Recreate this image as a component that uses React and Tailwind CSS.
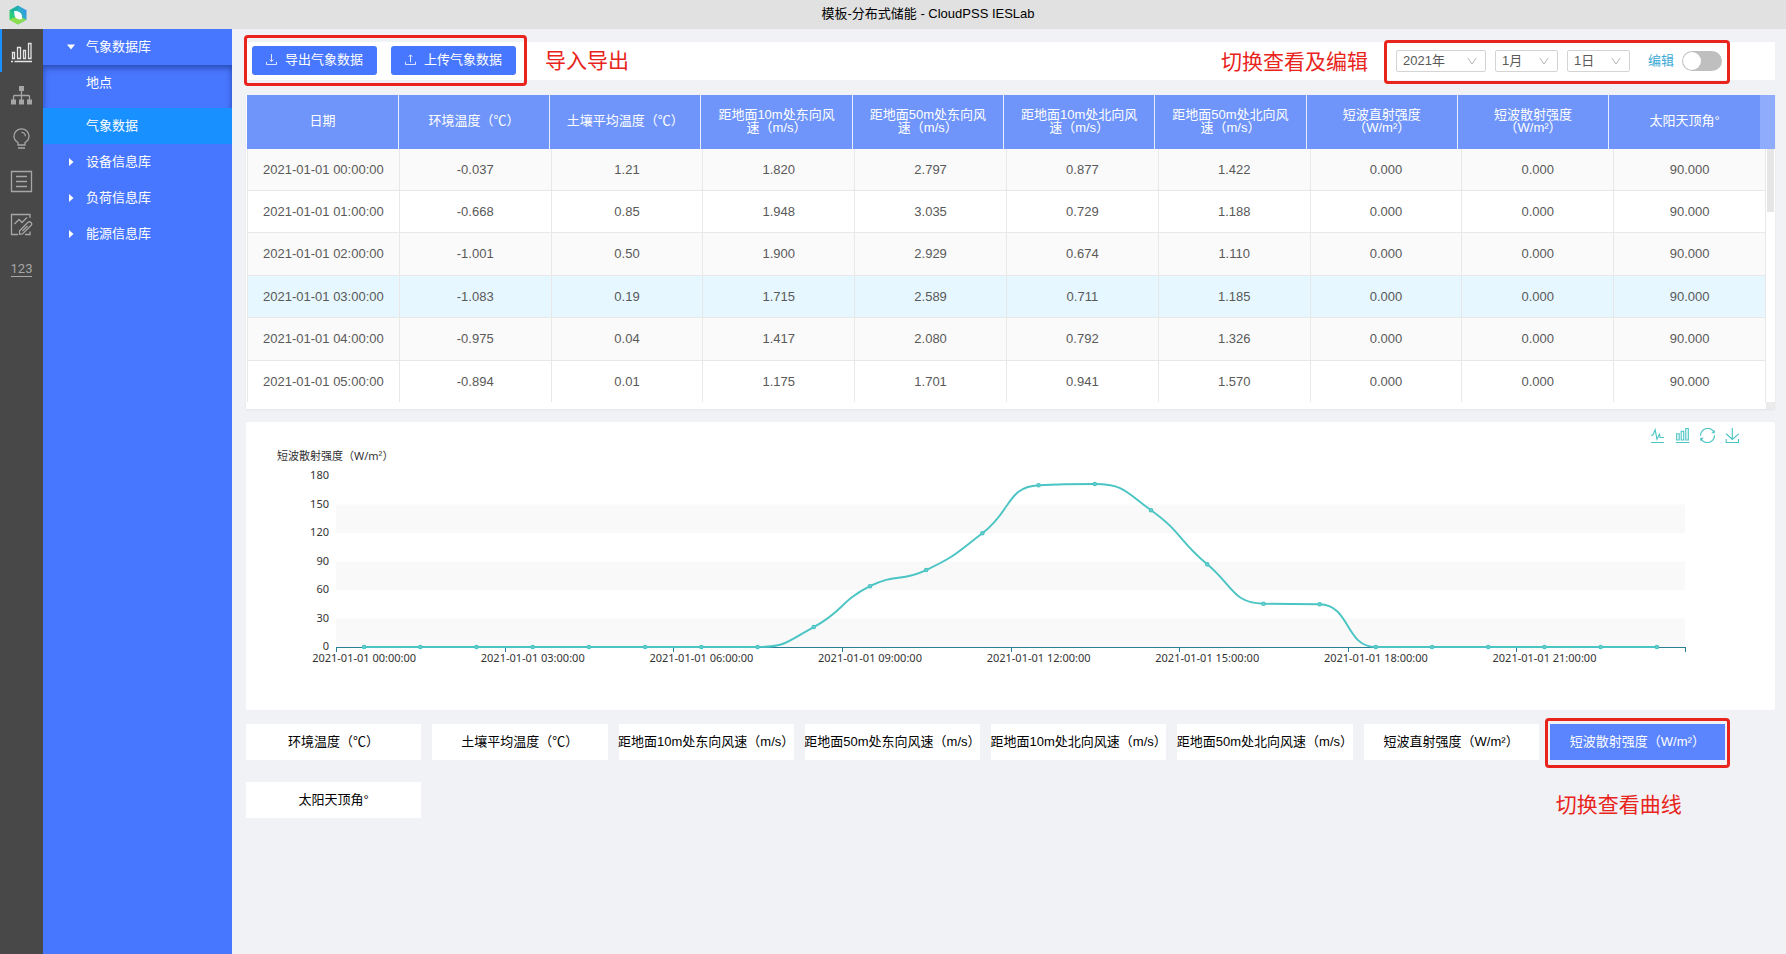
import React, { useState } from 'react';

const columns = [
  '日期',
  '环境温度（℃）',
  '土壤平均温度（℃）',
  '距地面10m处东向风速（m/s）',
  '距地面50m处东向风速（m/s）',
  '距地面10m处北向风速（m/s）',
  '距地面50m处北向风速（m/s）',
  '短波直射强度（W/m²）',
  '短波散射强度（W/m²）',
  '太阳天顶角°',
];

const rows = [
  ['2021-01-01 00:00:00', '-0.037', '1.21', '1.820', '2.797', '0.877', '1.422', '0.000', '0.000', '90.000'],
  ['2021-01-01 01:00:00', '-0.668', '0.85', '1.948', '3.035', '0.729', '1.188', '0.000', '0.000', '90.000'],
  ['2021-01-01 02:00:00', '-1.001', '0.50', '1.900', '2.929', '0.674', '1.110', '0.000', '0.000', '90.000'],
  ['2021-01-01 03:00:00', '-1.083', '0.19', '1.715', '2.589', '0.711', '1.185', '0.000', '0.000', '90.000'],
  ['2021-01-01 04:00:00', '-0.975', '0.04', '1.417', '2.080', '0.792', '1.326', '0.000', '0.000', '90.000'],
  ['2021-01-01 05:00:00', '-0.894', '0.01', '1.175', '1.701', '0.941', '1.570', '0.000', '0.000', '90.000'],
];

const radiation = [0, 0, 0, 0, 0, 0, 0, 0, 21, 64, 81, 119.7, 170.2, 171.6, 144, 87, 45.6, 45, 0, 0, 0, 0, 0, 0];

// Plot area inside the chart's viewBox
const PLOT = { left: 90, right: 1439, top: 54, bottom: 225, max: 180 };
const STEP = (PLOT.right - PLOT.left) / radiation.length;

const points = radiation.map((v, i) => [
  PLOT.left + STEP * (i + 0.5),
  PLOT.bottom - (v / PLOT.max) * (PLOT.bottom - PLOT.top),
]);

const clamp = (v, a, b) => Math.max(Math.min(v, Math.max(a, b)), Math.min(a, b));

// Bezier path whose control points never leave the box of their segment
function smoothPath(pts, smooth = 0.5) {
  let d = `M${pts[0][0]},${pts[0][1]}`;
  let cp0 = pts[0];
  for (let i = 1; i < pts.length; i++) {
    const [x, y] = pts[i];
    const prev = pts[i - 1];
    const next = pts[i + 1];
    let cp1 = [x, y];
    let nextCp0 = [x, y];
    if (next) {
      const lenPrev = Math.hypot(x - prev[0], y - prev[1]);
      const lenNext = Math.hypot(next[0] - x, next[1] - y);
      const ratio = lenNext / (lenNext + lenPrev);
      const nx = clamp(x + (next[0] - prev[0]) * smooth * ratio, next[0], x);
      const ny = clamp(y + (next[1] - prev[1]) * smooth * ratio, next[1], y);
      cp1 = [
        clamp(x - ((nx - x) * lenPrev) / lenNext, prev[0], x),
        clamp(y - ((ny - y) * lenPrev) / lenNext, prev[1], y),
      ];
      nextCp0 = [x + ((x - cp1[0]) * lenNext) / lenPrev, y + ((y - cp1[1]) * lenNext) / lenPrev];
    }
    d += `C${cp0[0]},${cp0[1]},${cp1[0]},${cp1[1]},${x},${y}`;
    cp0 = nextCp0;
  }
  return d;
}

function Logo() {
  return (
    <svg viewBox="0 0 18 20" className="w-[18px] h-5">
      <defs>
        <linearGradient id="logo" x1="0" y1="0.7" x2="1" y2="0.2">
          <stop offset="0" stopColor="#2fd45f" />
          <stop offset="0.5" stopColor="#22bfae" />
          <stop offset="1" stopColor="#3a8ff0" />
        </linearGradient>
      </defs>
      <path d="M9 0.5 17.5 5.2V14.8L9 19.5 0.5 14.8V5.2Z" fill="url(#logo)" />
      <path d="M0.5 14.8 9 19.5 17.5 14.8 13 12.500 5 12.500Z" fill="#a5e23c" opacity="0.8" />
      <path d="M0.5 5.2 9 0.5V4L4 8Z" fill="#1fa8a0" opacity="0.6" />
      <path d="M5 6.300C8 5.600 11.800 7 12.900 10.300C13.300 12.200 12.900 14 12.900 14C10.800 14.900 7.800 14.400 6.300 12.300C5 10.300 5.700 8.300 5 6.300Z" fill="#fff" />
    </svg>
  );
}

const railIcons = [
  {
    label: '数据',
    art: (
      <>
        <path d="M1 20.500H3M4.500 20.500H22" />
        <path d="M2.500 11.500H4.500V17.500H2.500ZM7.500 6.500H10.500V17.500H7.500ZM13.500 9.500H15.500V17.500H13.500ZM18.500 2.500H21V17.500H18.500Z" />
      </>
    ),
  },
  {
    label: '拓扑',
    art: (
      <>
        <path d="M11.500 6V16M3.500 16V12.500Q3.500 11.500 4.500 11.500H18.500Q19.500 11.500 19.500 12.500V16" />
        <path d="M9 2H14V7H9ZM1 15.500H6V20.500H1ZM9 15.500H14V20.500H9ZM17 15.500H22V20.500H17Z" fill="currentColor" stroke="none" />
      </>
    ),
  },
  {
    label: '方案',
    art: (
      <>
        <path d="M8 18V15.500C5.500 14.200 4 12 4 9.300A7.500 7.500 0 0 1 19 9.300C19 12 17.500 14.200 15 15.500V18Z" />
        <path d="M11.500 5.300A4 4 0 0 1 15.500 9.300M8 21H15" />
      </>
    ),
  },
  {
    label: '列表',
    art: (
      <>
        <path d="M1.500 1.500H21.500V21.500H1.500Z" />
        <path d="M6 6.500H17M6 11.500H17M6 16.500H17" />
      </>
    ),
  },
  {
    label: '评估',
    art: (
      <>
        <path d="M20 5V1.500H1.500V21.500H8M15 21.500H20V18.500" />
        <path d="M4.500 11 9 6.500 12 9.500 17 4.500" />
        <path d="M9.500 18 18 9.300Q19.500 8 21 9.500T21 12.500L12.500 21 9.500 21.300ZM12.500 18 17.500 13" />
      </>
    ),
  },
];

function Rail() {
  return (
    <nav className="w-[43px] shrink-0 bg-[#484848] flex flex-col">
      {railIcons.map((icon, i) => (
        <button
          key={icon.label}
          aria-label={icon.label}
          className={`h-[43px] w-full pt-1 flex items-center justify-center border-x-2 border-r-transparent ${
            i === 0 ? 'text-[#e4e4e4] border-l-[#1890ff]' : 'text-[#a6a6a6] border-l-transparent'
          }`}
        >
          <svg viewBox="0 0 23 23" className="w-[23px] h-[23px]" fill="none" stroke="currentColor" strokeWidth="1.300">
            {icon.art}
          </svg>
        </button>
      ))}
      <button className="h-[43px] w-full pt-2 flex items-center justify-center text-[#a6a6a6]">
        <span className="font-[Roboto] text-[13px] leading-[14px] border-b border-[#a6a6a6]">123</span>
      </button>
    </nav>
  );
}

function Sidebar() {
  return (
    <aside className="w-[189px] shrink-0 bg-[#4877ff] text-white">
      <a href="#weather" className="h-9 pl-6 pb-px flex items-center">
        <svg viewBox="0 0 8 6" className="w-2 h-[6px] mr-[11px]" fill="currentColor"><path d="M0 0.500H8L4 5.500Z" /></svg>
        气象数据库
      </a>
      <div className="shadow-[inset_0_3px_6px_rgba(0,21,80,0.45)]">
        <a href="#place" className="h-[43px] pl-[43px] pb-2 flex items-center">地点</a>
        <a href="#data" className="h-9 pl-[43px] pb-px flex items-center bg-[#1890ff]">气象数据</a>
      </div>
      {['设备信息库', '负荷信息库', '能源信息库'].map((name) => (
        <a key={name} href={`#${name}`} className="h-9 pl-6 pb-px flex items-center">
          <svg viewBox="0 0 8 8" className="w-2 h-2 mr-[11px]" fill="currentColor"><path d="M2 0V8L6.500 4Z" /></svg>
          {name}
        </a>
      ))}
    </aside>
  );
}

// Red frame that points out a group of controls
function Frame({ className }) {
  return <div className={`absolute border-[3px] border-[#e8241c] rounded-[4px] pointer-events-none ${className}`} />;
}

function ToolButton({ upload, children }) {
  return (
    <button className="w-[125px] h-[29px] pb-[2px] rounded-[3px] bg-[#4877ff] text-white flex items-center justify-center gap-2">
      <svg viewBox="0 0 12 12" className="w-[11px] h-[11px]" fill="none" stroke="currentColor" strokeWidth="0.900">
        <path d="M0.500 8.500V11.500H11.500V8.500" />
        {upload ? <path d="M6 9V1M4 3 6 1 8 3" /> : <path d="M6 0V8M4 6.200 6 8.200 8 6.200" />}
      </svg>
      {children}
    </button>
  );
}

function Picker({ label, value, className }) {
  return (
    <div className={`relative ${className}`}>
      <select
        aria-label={label}
        defaultValue={value}
        className="w-full h-[22px] pl-[6px] pb-[3px] appearance-none bg-white border border-[#d4d4d4] rounded-[2px] text-[#595959]"
      >
        <option>{value}</option>
      </select>
      <svg viewBox="0 0 10 8" className="absolute right-[9px] top-[7px] w-[10px] h-2 pointer-events-none" fill="none" stroke="#b5b5b5">
        <path d="M0.800 1 5 7 9.200 1" />
      </svg>
    </div>
  );
}

function Toolbar() {
  const [editing, setEditing] = useState(false);
  return (
    <div className="mt-[13px] h-[38px] bg-white flex items-center pl-[6px] pr-[53px]">
      <div className="relative flex gap-[14px] mb-px">
        <ToolButton>导出气象数据</ToolButton>
        <ToolButton upload>上传气象数据</ToolButton>
        <Frame className="-left-2 -right-[11px] -inset-y-[11px]" />
      </div>
      <span className="ml-[29px] text-[21px] text-[#e8241c]">导入导出</span>
      <span className="ml-auto pt-[2px] text-[21px] text-[#e8241c]">切换查看及编辑</span>
      <div className="relative ml-7 flex items-center">
        <Picker label="年" value="2021年" className="w-[90px]" />
        <Picker label="月" value="1月" className="w-[63px] ml-[9px]" />
        <Picker label="日" value="1日" className="w-[63px] ml-[9px]" />
        <label className="ml-[18px] flex items-center gap-2 text-[#3ba9d6]">
          编辑
          <input
            type="checkbox"
            checked={editing}
            onChange={(e) => setEditing(e.target.checked)}
            className="appearance-none w-10 h-5 rounded-full bg-[#bfbfbf] p-px flex before:content-[''] before:w-[18px] before:h-[18px] before:rounded-full before:bg-white checked:bg-[#1890ff] checked:justify-end"
          />
        </label>
        <Frame className="-left-3 -right-2 -top-[10px] -bottom-3" />
      </div>
    </div>
  );
}

function DataTable() {
  return (
    <div className="mt-[15px] pl-px bg-white shadow-[0_1px_2px_rgba(0,0,0,0.06)]">
      <div className="flex">
        <table className="flex-1 w-full table-fixed h-[54px] bg-[#6f95fb] text-white leading-[13px]">
          <thead>
            <tr>
              {columns.map((name) => (
                <th key={name} scope="col" className="px-[14px] pb-[3px] font-normal text-center align-middle border-r border-[#e6edff] last:border-r-0">
                  {name}
                </th>
              ))}
            </tr>
          </thead>
        </table>
        <div className="w-[15px] bg-[#8fabfc]" />
      </div>
      <div className="flex h-[260px]">
        <div className="flex-1">
          <table className="w-full table-fixed h-[253px] text-[#595959] border-l border-[#e8e8e8]">
            <tbody>
              {rows.map((row, i) => (
                <tr
                  key={row[0]}
                  className={`border-b border-[#e8e8e8] last:border-b-0 ${
                    i === 3 ? 'bg-[#e6f7ff]' : i % 2 === 0 ? 'bg-[#fafafa]' : 'bg-white'
                  }`}
                >
                  {row.map((cell, c) => (
                    <td key={c} className="p-0 text-center whitespace-nowrap border-r border-[#e8e8e8]">{cell}</td>
                  ))}
                </tr>
              ))}
            </tbody>
          </table>
        </div>
        {/* Scrollbar */}
        <div className="w-[9px] flex flex-col justify-between items-center">
          <div className="w-[7px] h-[63px] bg-[#e6e6e6]" />
          <div className="w-full h-[7px] bg-[#ebebeb]" />
        </div>
      </div>
    </div>
  );
}

const tools = [
  { label: '折线图', d: 'M4.1,28.9h7.1l9.3-22l7.4,38l9.7-19.7l3,12.8h14.9M4.1,58h51.4' },
  { label: '柱状图', d: 'M6.7,22.9h10V48h-10V22.9zM24.9,13h10v35h-10V13zM43.2,2h10v46h-10V2zM3.1,58h53.7' },
  {
    label: '还原',
    d: 'M47,18.9h9.8V8.7M56.3,20.1C52.1,9,40.5,0.6,26.8,2.1C12.6,3.7,1.6,16.2,2.1,30.6M13,41.1H3.1v10.2M3.7,39.9c4.2,11.1,15.8,19.5,29.5,18c14.2-1.6,25.2-14.1,24.7-28.5',
  },
  { label: '下载', d: 'M4.7,22.9L29.3,45.5L54.7,23.4M4.6,43.6L4.6,58L53.8,58L53.8,43.6M29.2,45.1L29.2,0' },
];

function Chart() {
  return (
    <div className="relative mt-[13px] bg-white rounded-[2px]">
      <svg viewBox="0 0 1529 288" className="block w-full font-['Noto_Sans','Noto_Sans_CJK_SC',sans-serif] text-[11px]" fill="#333">
        <text x="31" y="38">短波散射强度（W/m²）</text>
        {[150, 90, 30].map((v) => (
          <rect key={v} x={PLOT.left} y={PLOT.bottom - v * 0.95} width={PLOT.right - PLOT.left} height="28.5" fill="#f9f9f9" />
        ))}
        {[180, 150, 120, 90, 60, 30, 0].map((v) => (
          <text key={v} x="83" y={PLOT.bottom - v * 0.95 + 3} textAnchor="end">{v}</text>
        ))}
        <path d={`M${PLOT.left},225.500H${PLOT.right}`} stroke="#2a7f95" fill="none" />
        {[0, 3, 6, 9, 12, 15, 18, 21, 24].map((h) => (
          <path key={h} d={`M${Math.round(PLOT.left + STEP * h) + 0.5},225v5`} stroke="#2a7f95" fill="none" />
        ))}
        {[0, 3, 6, 9, 12, 15, 18, 21].map((h) => (
          <text key={h} x={PLOT.left + STEP * (h + 0.5)} y="240" textAnchor="middle">
            {`2021-01-01 ${String(h).padStart(2, '0')}:00:00`}
          </text>
        ))}
        <path d={smoothPath(points)} fill="none" stroke="#4bc4c4" strokeWidth="1.900" />
        {points.map(([x, y], i) => (
          <circle key={i} cx={x} cy={y} r="1.700" fill="#6fcfcf" stroke="#4bc4c4" strokeWidth="1.200" />
        ))}
      </svg>
      <div className="absolute top-[6px] right-[35px] flex gap-[10px]">
        {tools.map((tool) => (
          <button key={tool.label} aria-label={tool.label}>
            <svg viewBox="0 0 60 60" className="block w-[15px] h-[15px]" fill="none" stroke="#4bc4c4" strokeWidth="4.500">
              <path d={tool.d} />
            </svg>
          </button>
        ))}
      </div>
    </div>
  );
}

function SeriesPicker() {
  const [active, setActive] = useState(columns[8]);
  return (
    <div className="mt-[14px] pr-[50px] grid grid-cols-8 gap-x-[11px] gap-y-[22px]">
      {columns.slice(1).map((name) => (
        <button
          key={name}
          onClick={() => setActive(name)}
          className={`relative h-9 pb-px flex items-center justify-center whitespace-nowrap ${
            name === active ? 'bg-[#5b84ff] text-white' : 'bg-white text-black'
          }`}
        >
          {name}
          {name === columns[8] && <Frame className="-inset-x-[5px] -top-[6px] -bottom-2" />}
        </button>
      ))}
      <span className="col-start-8 self-end pl-[6px] text-[21px] leading-[26px] text-[#e8241c]">切换查看曲线</span>
    </div>
  );
}

export default function App() {
  return (
    <div className="min-h-screen flex flex-col bg-[#f0f2f5] text-[13px] font-['Liberation_Sans','Noto_Sans_CJK_SC',sans-serif]">
      <header className="h-[29px] shrink-0 bg-[#e1e1e1] flex items-center pl-[9px]">
        <Logo />
        <h1 className="flex-1 pl-[43px] pb-[2px] text-center text-black">模板-分布式储能 - CloudPSS IESLab</h1>
      </header>
      <div className="flex-1 flex">
        <Rail />
        <Sidebar />
        <main className="flex-1 min-w-0 pl-[14px] pr-[11px]">
          <Toolbar />
          <DataTable />
          <Chart />
          <SeriesPicker />
        </main>
      </div>
    </div>
  );
}
